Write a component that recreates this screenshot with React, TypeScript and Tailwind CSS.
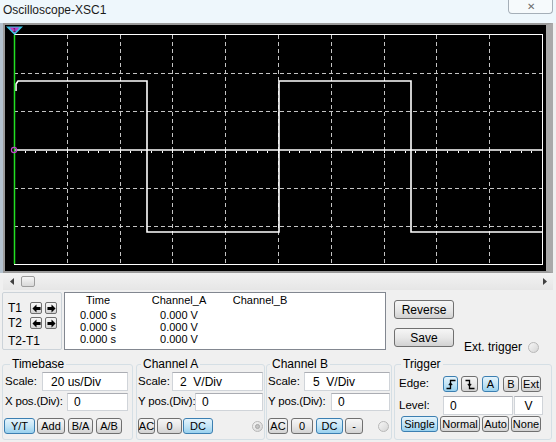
import React from 'react'

const GX0 = 14
const GX1 = 542
const GY0 = 35
const GY1 = 264

const GRAY = 'border border-[#707070] bg-linear-to-b from-[#f6f6f6] via-[#e8e8e8] to-[#d2d2d2]'
const BLUE = 'border border-[#3c7fb1] bg-linear-to-b from-[#e5f4fc] via-[#c4e5f6] to-[#98d1ef]'

function Btn({ blue, className, children }: { blue?: boolean; className: string; children: React.ReactNode }) {
  return (
    <div
      className={`${className} ${blue ? BLUE : GRAY} rounded-[3px] flex items-center justify-center text-[11px] leading-none text-black shrink-0`}
    >
      {children}
    </div>
  )
}

function Field({ className, children }: { className: string; children?: React.ReactNode }) {
  return (
    <div
      className={`${className} bg-white border border-[#d0d4d9] border-t-[#abadb3] flex items-center text-[12px] whitespace-pre shrink-0`}
    >
      {children}
    </div>
  )
}

function Radio({ dot, className }: { dot?: boolean; className: string }) {
  return (
    <div
      className={`${className} w-[11px] h-[11px] rounded-full border border-[#b8b8b8] bg-linear-to-br from-[#f6f6f6] to-[#d6d6d6] flex items-center justify-center shrink-0`}
    >
      {dot && <div className="w-[5px] h-[5px] rounded-full bg-[#c4c4c4] border border-[#a8a8a8]" />}
    </div>
  )
}

function Arrow({ dir }: { dir: 'l' | 'r' }) {
  return (
    <div className={`${GRAY} w-[12px] h-[12px] rounded-[2px] flex items-center justify-center shrink-0`}>
      <svg width="9" height="9" viewBox="0 0 10 10">
        {dir === 'l' ? (
          <polygon points="0.5,5 5,0.5 5,3.3 9.5,3.3 9.5,6.7 5,6.7 5,9.5" fill="#000" />
        ) : (
          <polygon points="9.5,5 5,0.5 5,3.3 0.5,3.3 0.5,6.7 5,6.7 5,9.5" fill="#000" />
        )}
      </svg>
    </div>
  )
}

function Screen() {
  const dx = (GX1 - GX0) / 10
  const dy = (GY1 - GY0) / 6
  const vlines = Array.from({ length: 9 }, (_, i) => Math.round(GX0 + dx * (i + 1)) + 0.5)
  const hlines = [1, 2, 4, 5].map((j) => Math.round(GY0 + dy * j) + 0.5)
  const ticks = Array.from({ length: 49 }, (_, i) => Math.round(GX0 + (dx / 5) * (i + 1)) + 0.5)

  return (
    <svg width={541} height={246} viewBox="5 25 541 246" className="block">
      {vlines.map((x) => (
        <line key={x} x1={x} x2={x} y1={GY0} y2={GY1} stroke="#c4c4c4" strokeDasharray="4 3" />
      ))}
      {hlines.map((y) => (
        <line key={y} x1={GX0} x2={GX1} y1={y} y2={y} stroke="#c4c4c4" strokeDasharray="4 3" />
      ))}
      {/* center axis with ticks */}
      <line x1={GX0} x2={GX1} y1={150} y2={150} stroke="#fff" strokeWidth={1.6} />
      {ticks.map((x) => (
        <line key={x} x1={x} x2={x} y1={151} y2={153} stroke="#fff" />
      ))}
      {/* frame */}
      <rect x={GX0 + 0.5} y={GY0 - 0.5} width={GX1 - GX0} height={GY1 - GY0 + 1} fill="none" stroke="#fff" />
      {/* channel A trace */}
      <polyline
        points="16,91 16,84 18,81 147,81 147,232 279,232 279,81 411,81 411,232 542,232"
        fill="none"
        stroke="#fff"
        strokeWidth={1.6}
      />
      {/* cursor T1 */}
      <line x1={14.5} x2={14.5} y1={GY0} y2={GY1} stroke="#22e022" strokeWidth={1.5} />
      <polygon points="6,26.5 23,26.5 14.5,35" fill="#3cc4e4" />
      <polygon points="9.5,27.5 19.5,27.5 14.5,33" fill="#c03cc8" />
      <text x={14.5} y={32} fontSize={6} textAnchor="middle" fill="#202020" fontFamily="Liberation Sans, sans-serif">
        1
      </text>
      <circle cx={14} cy={150} r={2.6} fill="none" stroke="#c048c8" strokeWidth={1.2} />
    </svg>
  )
}

export default function App() {
  return (
    <div className="w-[556px] h-[442px] bg-[#f0f0f0] flex flex-col overflow-hidden font-['Liberation_Sans',Arial,sans-serif] text-black">
      {/* Title bar */}
      <div className="h-[23px] bg-[#eef7fc] flex items-start justify-between shrink-0">
        <span className="pl-[3px] pt-[3px] text-[12px] leading-[14px] text-[#1a1a1a]">Oscilloscope-XSC1</span>
        <div className="mr-[3px] w-[45px] h-[14px] rounded-b-[4px] border border-t-0 border-[#a5afb8] bg-[#f6fafc] flex items-center justify-center">
          <span className="text-[10px] leading-[12px] text-[#6b6b6b]">✕</span>
        </div>
      </div>

      {/* Scope display */}
      <div className="flex shrink-0">
        <div className="w-[3px] h-[250px] bg-[#b4c2ce]" />
        <div className="w-[550px] h-[250px] border-2 border-r-[7px] border-[#9a9a9a] border-r-[#a9a9a9] bg-black">
          <Screen />
        </div>
      </div>

      {/* Scrollbar */}
      <div className="ml-[3px] w-[550px] h-[17px] bg-linear-to-b from-[#f2f2f2] to-[#e6e6e6] flex items-center shrink-0">
        <svg width="4" height="7" viewBox="0 0 4 7" className="ml-[7px]">
          <polygon points="4,0 0,3.5 4,7" fill="#404040" />
        </svg>
        <div className="ml-[7px] w-[14px] h-[11px] rounded-[2px] border border-[#9c9c9c] bg-linear-to-b from-[#f6f6f6] to-[#d8d8d8]" />
        <div className="flex-1" />
        <svg width="4" height="7" viewBox="0 0 4 7" className="mr-[6px]">
          <polygon points="0,0 4,3.5 0,7" fill="#404040" />
        </svg>
      </div>

      {/* Cursors + readout */}
      <div className="mt-[2px] h-[66px] flex shrink-0">
        <div className="ml-[2px] w-[60px] h-[58px] border border-[#ccd3d9] rounded-[2px] flex flex-col pl-[5px] pt-[9px] text-[12px]">
          <div className="h-[12px] flex items-center">
            <span className="w-[22px] leading-[12px]">T1</span>
            <Arrow dir="l" />
            <div className="w-[3px]" />
            <Arrow dir="r" />
          </div>
          <div className="mt-[3px] h-[12px] flex items-center">
            <span className="w-[22px] leading-[12px]">T2</span>
            <Arrow dir="l" />
            <div className="w-[3px]" />
            <Arrow dir="r" />
          </div>
          <span className="mt-[5px] leading-[14px]">T2-T1</span>
        </div>

        <div className="ml-[2px] w-[322px] h-[58px] bg-white border border-[#828790] flex text-[11px] leading-[12px] pt-[1px] whitespace-nowrap">
          <div className="ml-[15px] w-[36px] flex flex-col items-center">
            <span>Time</span>
            <span className="mt-[3px]">0.000 s</span>
            <span>0.000 s</span>
            <span>0.000 s</span>
          </div>
          <div className="ml-[44px] w-[38px] flex flex-col items-center">
            <span>Channel_A</span>
            <span className="mt-[3px]">0.000 V</span>
            <span>0.000 V</span>
            <span>0.000 V</span>
          </div>
          <div className="ml-[34px] w-[56px] flex flex-col items-center">
            <span>Channel_B</span>
          </div>
        </div>

        <div className="ml-[8px] flex flex-col">
          <Btn className="mt-[8px] w-[60px] h-[19px] text-[12px]">Reverse</Btn>
          <div className="flex items-start">
            <Btn className="mt-[9px] w-[60px] h-[19px] text-[12px]">Save</Btn>
            <span className="ml-[10px] mt-[21px] text-[12px] leading-[14px] whitespace-nowrap">Ext. trigger</span>
            <Radio className="ml-[6px] mt-[23px]" />
          </div>
        </div>
      </div>

      {/* Control groups */}
      <div className="h-[82px] flex shrink-0 text-[11.5px]">
        <fieldset className="ml-[2px] w-[131px] h-[82px] border border-[#d5dfe5] rounded-[3px] p-0">
          <legend className="ml-[7px] px-[2px] leading-[12px] text-[12px]">Timebase</legend>
          <div className="flex flex-col pl-[2px]">
            <div className="mt-[2px] h-[19px] flex items-center">
              <span className="w-[37px]">Scale:</span>
              <Field className="w-[86px] h-[19px] pl-[8px]">20 us/Div</Field>
            </div>
            <div className="mt-[2px] h-[18px] flex items-center">
              <span className="w-[62px] whitespace-nowrap tracking-[-0.2px]">X pos.(Div):</span>
              <Field className="w-[61px] h-[18px] pl-[6px]">0</Field>
            </div>
            <div className="mt-[7px] h-[16px] flex -ml-[1px]">
              <Btn blue className="w-[31px] h-[16px]">Y/T</Btn>
              <Btn className="ml-[2px] w-[28px] h-[16px]">Add</Btn>
              <Btn className="ml-[3px] w-[25px] h-[16px]">B/A</Btn>
              <Btn className="ml-[3px] w-[26px] h-[16px]">A/B</Btn>
            </div>
          </div>
        </fieldset>

        <fieldset className="ml-[3px] w-[129px] h-[82px] border border-[#d5dfe5] rounded-[3px] p-0">
          <legend className="ml-[4px] px-[2px] leading-[12px] text-[12px]">Channel A</legend>
          <div className="flex flex-col pl-[1px]">
            <div className="mt-[2px] h-[19px] flex items-center">
              <span className="w-[34px]">Scale:</span>
              <Field className="w-[91px] h-[19px] pl-[7px]">2  V/Div</Field>
            </div>
            <div className="mt-[2px] h-[18px] flex items-center">
              <span className="w-[57px] whitespace-nowrap tracking-[-0.2px]">Y pos.(Div):</span>
              <Field className="w-[68px] h-[18px] pl-[6px]">0</Field>
            </div>
            <div className="mt-[7px] h-[16px] flex items-center">
              <Btn className="w-[17px] h-[16px]">AC</Btn>
              <Btn className="ml-[2px] w-[25px] h-[16px]">0</Btn>
              <Btn blue className="ml-[1px] w-[30px] h-[16px]">DC</Btn>
              <Radio dot className="ml-[39px]" />
            </div>
          </div>
        </fieldset>

        <fieldset className="ml-[1px] w-[126px] h-[82px] border border-[#d5dfe5] rounded-[3px] p-0">
          <legend className="ml-[3px] px-[2px] leading-[12px] text-[12px]">Channel B</legend>
          <div className="flex flex-col pl-[1px]">
            <div className="mt-[2px] h-[19px] flex items-center">
              <span className="w-[36px]">Scale:</span>
              <Field className="w-[86px] h-[19px] pl-[8px]">5  V/Div</Field>
            </div>
            <div className="mt-[2px] h-[18px] flex items-center">
              <span className="w-[63px] whitespace-nowrap tracking-[-0.2px]">Y pos.(Div):</span>
              <Field className="w-[59px] h-[18px] pl-[6px]">0</Field>
            </div>
            <div className="mt-[7px] h-[16px] flex items-center">
              <Btn className="w-[20px] h-[16px]">AC</Btn>
              <Btn className="ml-[3px] w-[22px] h-[16px]">0</Btn>
              <Btn blue className="ml-[3px] w-[27px] h-[16px]">DC</Btn>
              <Btn className="ml-[2px] w-[18px] h-[16px]">-</Btn>
              <Radio className="ml-[15px]" />
            </div>
          </div>
        </fieldset>

        <fieldset className="ml-[2px] w-[158px] h-[82px] border border-[#d5dfe5] rounded-[3px] p-0">
          <legend className="ml-[6px] px-[2px] leading-[12px] text-[12px]">Trigger</legend>
          <div className="flex flex-col pl-[4px]">
            <div className="mt-[6px] h-[16px] flex items-center">
              <span className="w-[44px]">Edge:</span>
              <Btn blue className="w-[15px] h-[16px]">
                <svg width="10" height="11" viewBox="0 0 10 11">
                  <path d="M0.5 9.5 H4.5 V1.5 H9.5" fill="none" stroke="#000" strokeWidth="1.3" />
                  <path d="M2.8 6.2 L4.5 4.2 L6.2 6.2" fill="none" stroke="#000" strokeWidth="1.1" />
                </svg>
              </Btn>
              <Btn className="ml-[3px] w-[17px] h-[16px]">
                <svg width="10" height="11" viewBox="0 0 10 11">
                  <path d="M0.5 1.5 H4.5 V9.5 H9.5" fill="none" stroke="#000" strokeWidth="1.3" />
                  <path d="M2.8 4.8 L4.5 6.8 L6.2 4.8" fill="none" stroke="#000" strokeWidth="1.1" />
                </svg>
              </Btn>
              <Btn blue className="ml-[4px] w-[17px] h-[16px]">A</Btn>
              <Btn className="ml-[4px] w-[16px] h-[16px]">B</Btn>
              <Btn className="ml-[2px] w-[20px] h-[16px]">Ext</Btn>
            </div>
            <div className="mt-[4px] h-[19px] flex items-center">
              <span className="w-[44px]">Level:</span>
              <Field className="w-[70px] h-[19px] pl-[6px]">0</Field>
              <Field className="ml-[1px] w-[29px] h-[19px] justify-center">V</Field>
            </div>
            <div className="mt-[1px] h-[16px] flex items-center">
              <Btn blue className="ml-[2px] w-[37px] h-[16px]">Single</Btn>
              <Btn className="ml-[2px] w-[40px] h-[16px]">Normal</Btn>
              <Btn className="ml-[2px] w-[27px] h-[16px]">Auto</Btn>
              <Btn className="ml-[2px] w-[30px] h-[16px]">None</Btn>
            </div>
          </div>
        </fieldset>
      </div>
    </div>
  )
}
